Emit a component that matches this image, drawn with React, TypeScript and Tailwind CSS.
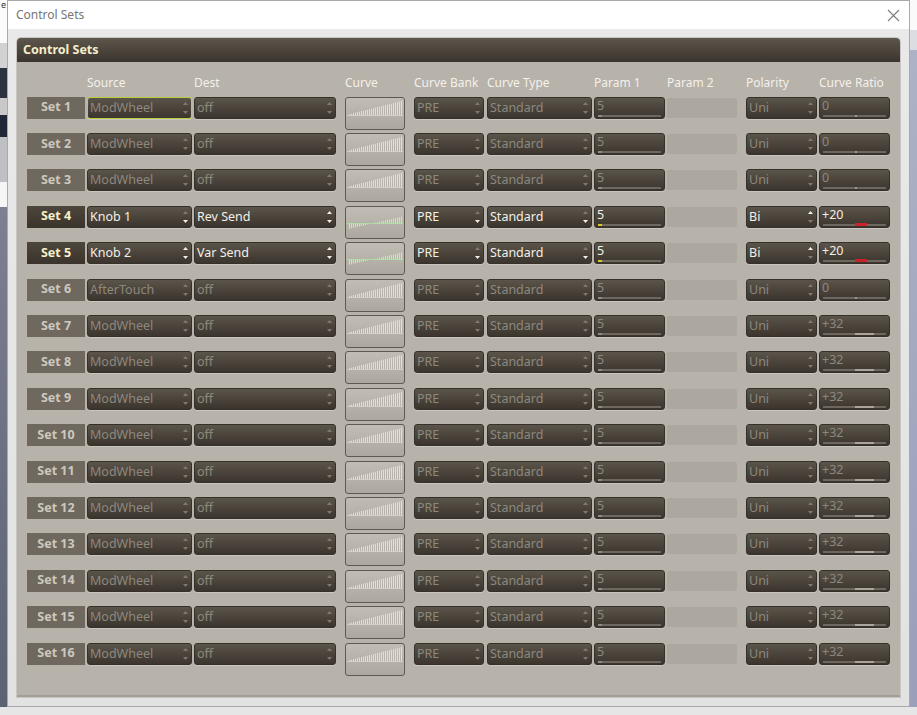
import React from 'react';

type Row = {
  name: string;
  src: string;
  dest: string;
  active?: boolean;
  ratio: string;
  ratioMark: 'dot' | 'light' | 'red';
  polarity: string;
  srcUp?: boolean;
};

const rows: Row[] = [
  { name: 'Set 1', src: 'ModWheel', dest: 'off', ratio: '0', ratioMark: 'dot', polarity: 'Uni' },
  { name: 'Set 2', src: 'ModWheel', dest: 'off', ratio: '0', ratioMark: 'dot', polarity: 'Uni' },
  { name: 'Set 3', src: 'ModWheel', dest: 'off', ratio: '0', ratioMark: 'dot', polarity: 'Uni' },
  { name: 'Set 4', src: 'Knob 1', dest: 'Rev Send', active: true, ratio: '+20', ratioMark: 'red', polarity: 'Bi' },
  { name: 'Set 5', src: 'Knob 2', dest: 'Var Send', active: true, ratio: '+20', ratioMark: 'red', polarity: 'Bi', srcUp: true },
  { name: 'Set 6', src: 'AfterTouch', dest: 'off', ratio: '0', ratioMark: 'dot', polarity: 'Uni' },
  ...Array.from({ length: 10 }, (_, i) => ({
    name: `Set ${i + 7}`,
    src: 'ModWheel',
    dest: 'off',
    ratio: '+32',
    ratioMark: 'light' as const,
    polarity: 'Uni',
  })),
];

const ON = '#f4f0e8';
const OFF = '#7f796f';

const Arrows = ({ up, down }: { up: boolean; down: boolean }) => (
  <div className="absolute right-[3px] top-[4px] bottom-[4px] flex flex-col justify-between">
    <svg width="5" height="3" viewBox="0 0 5 3">
      <path d="M0 3 L2.5 0 L5 3Z" fill={up ? ON : OFF} />
    </svg>
    <svg width="5" height="3" viewBox="0 0 5 3">
      <path d="M0 0 L5 0 L2.5 3Z" fill={down ? ON : OFF} />
    </svg>
  </div>
);

const fieldBase =
  'relative h-[22px] rounded-[3px] border bg-linear-to-b from-[#5b544a] to-[#3b352e] shadow-[0_1px_0_rgba(255,255,255,0.25)] overflow-hidden';

const Select = ({
  w,
  text,
  active,
  up,
  down,
  focus,
}: {
  w: string;
  text: string;
  active?: boolean;
  up?: boolean;
  down?: boolean;
  focus?: boolean;
}) => (
  <div className={`${fieldBase} ${w} ${focus ? 'border-[#b7cf3f]' : 'border-[#35302a]'}`}>
    <span
      className={`block pl-[2px] leading-[20px] text-[12.5px] whitespace-nowrap ${
        active ? 'text-[#f3efe7]' : 'text-[#8d887e]'
      }`}
    >
      {text}
    </span>
    <Arrows up={!!up} down={!!down} />
  </div>
);

const SliderField = ({
  w,
  text,
  active,
  mark,
}: {
  w: string;
  text: string;
  active?: boolean;
  mark: 'left' | 'dot' | 'light' | 'red';
}) => (
  <div className={`${fieldBase} ${w} border-[#35302a] flex flex-col`}>
    <span
      className={`block pl-[2px] h-[15px] leading-[15px] text-[12.5px] ${
        active ? 'text-[#f3efe7]' : 'text-[#8d887e]'
      }`}
    >
      {text}
    </span>
    <div className="mx-[3px] mt-[2px] h-[2px] bg-[#6d675d] flex">
      {mark === 'left' && (
        <div className={`w-[4px] h-[2px] ${active ? 'bg-[#d9c72a]' : 'bg-[#8f897f]'}`} />
      )}
      {mark === 'dot' && (
        <>
          <div className="w-1/2" />
          <div className="w-[2px] h-[2px] bg-[#9e988e]" />
        </>
      )}
      {mark === 'light' && (
        <>
          <div className="w-1/2" />
          <div className="w-[19px] h-[2px] bg-[#aaa49a]" />
        </>
      )}
      {mark === 'red' && (
        <>
          <div className="w-1/2" />
          <div className="w-[12px] h-[3px] -mt-[1px] bg-[#c8232b]" />
        </>
      )}
    </div>
  </div>
);

const Curve = ({ bipolar }: { bipolar?: boolean }) => {
  const xs = Array.from({ length: 27 }, (_, i) => 3.5 + i * 2);
  return (
    <div className="w-[60px] h-[33px] rounded-[3px] border border-[#5f5951] bg-linear-to-b from-[#c1bcb4] to-[#aca79f] overflow-hidden">
      <svg width="58" height="31" viewBox="0 0 58 31">
        {bipolar ? (
          <g>
            <line x1="1" y1="16.5" x2="57" y2="16.5" stroke="#a8eaa0" strokeWidth="1" opacity="0.7" />
            {xs.map((x) => {
              const y = 16.5 + 6 - (13.5 * x) / 58;
              return (
                <line key={x} x1={x} y1={16.5} x2={x} y2={y} stroke="#b2f2aa" strokeWidth="1.1" />
              );
            })}
          </g>
        ) : (
          <g opacity="0.8">
            <line x1="1" y1="17.5" x2="57" y2="17.5" stroke="#e4e0da" strokeWidth="1" opacity="0.7" />
            {xs.map((x) => {
              const h = 0.5 + (14.5 * x) / 58;
              return (
                <line key={x} x1={x} y1={17.5} x2={x} y2={17.5 - h} stroke="#eeeae4" strokeWidth="1" />
              );
            })}
          </g>
        )}
      </svg>
    </div>
  );
};

const headers: { label: string; cls: string }[] = [
  { label: '', cls: 'w-[58px]' },
  { label: 'Source', cls: 'w-[105px] ml-[2px]' },
  { label: 'Dest', cls: 'w-[142px] ml-[2px]' },
  { label: 'Curve', cls: 'w-[60px] ml-[9px]' },
  { label: 'Curve Bank', cls: 'w-[70px] ml-[9px]' },
  { label: 'Curve Type', cls: 'w-[105px] ml-[3px]' },
  { label: 'Param 1', cls: 'w-[71px] ml-[2px]' },
  { label: 'Param 2', cls: 'w-[70px] ml-[2px]' },
  { label: 'Polarity', cls: 'w-[71px] ml-[9px]' },
  { label: 'Curve Ratio', cls: 'w-[71px] ml-[2px]' },
];

export default function App() {
  return (
    <div className="w-[917px] h-[715px] flex flex-col overflow-hidden bg-[#e4e4e4] font-['Noto_Sans','Open_Sans',sans-serif]">
      <div className="h-[707px] flex">
        {/* background application peeking on the left */}
        <div className="w-[7px] flex flex-col">
          <div className="h-[43px] bg-[#fbfbfb] pl-px text-[9px] leading-[10px] text-[#333]">e</div>
          <div className="h-[25px] bg-[#d2d2d4]" />
          <div className="h-[30px] bg-[#2c3240]" />
          <div className="h-[17px] bg-[#c9c9cc]" />
          <div className="h-[22px] bg-[#1f2738]" />
          <div className="h-[45px] bg-[#bfc0c4]" />
          <div className="h-[25px] bg-[#f6f6f6]" />
          <div className="flex-1 bg-linear-to-b from-[#7c8090] to-[#5d6272]" />
        </div>

        {/* dialog window */}
        <div className="w-[903px] flex flex-col border border-[#a9a9a9] bg-white">
          <div className="h-[28px] flex items-center justify-between pl-[8px] pr-[9px] bg-white">
            <span className="text-[12px] text-[#767676]">Control Sets</span>
            <svg width="13" height="13" viewBox="0 0 13 13">
              <path d="M1 1 L12 12 M12 1 L1 12" stroke="#7d7d7d" strokeWidth="1.1" />
            </svg>
          </div>
          <div className="flex-1 flex flex-col p-[9px] pb-[9px] bg-linear-to-b from-[#e9e9e9] to-[#e2e2e2]">
            <div className="flex-1 flex flex-col rounded-t-[4px] overflow-hidden shadow-[0_0_0_1px_#c8c6c2]">
              <div className="h-[24px] flex items-center pl-[6px] bg-linear-to-b from-[#5d564c] to-[#3b352e]">
                <span className="text-[12.5px] font-bold text-[#f5eecb]">Control Sets</span>
              </div>
              <div className="flex-1 bg-[#b7b2aa] pl-[10px] border-b-2 border-[#a29d95]">
                <div className="h-[34.5px] flex items-center pt-[8px]">
                  {headers.map((h, i) => (
                    <div key={i} className={`${h.cls} text-[12px] text-[#f4f1ea] whitespace-nowrap`}>
                      {h.label}
                    </div>
                  ))}
                </div>
                {rows.map((r, i) => (
                  <div key={r.name} className="h-[36.42px] flex items-start">
                    <div
                      className={`w-[58px] h-[22px] flex items-center justify-center text-[12.5px] font-bold ${
                        r.active
                          ? 'bg-linear-to-b from-[#4d463c] to-[#3a342c] text-[#f6efc8]'
                          : 'bg-[#6e685f] text-[#cdc8be]'
                      }`}
                    >
                      {r.name}
                    </div>
                    <div className="ml-[2px]">
                      <Select
                        w="w-[105px]"
                        text={r.src}
                        active={r.active}
                        up={r.srcUp}
                        down={r.active}
                        focus={i === 0}
                      />
                    </div>
                    <div className="ml-[2px]">
                      <Select w="w-[142px]" text={r.dest} active={r.active} up={r.active} down={r.active} />
                    </div>
                    <div className="ml-[9px]">
                      <Curve bipolar={r.active} />
                    </div>
                    <div className="ml-[9px]">
                      <Select w="w-[70px]" text="PRE" active={r.active} down={r.active} />
                    </div>
                    <div className="ml-[3px]">
                      <Select w="w-[105px]" text="Standard" active={r.active} down={r.active} />
                    </div>
                    <div className="ml-[2px]">
                      <SliderField w="w-[71px]" text="5" active={r.active} mark="left" />
                    </div>
                    <div className="ml-[2px] mt-[1px] w-[70px] h-[20px] rounded-[2px] bg-[#ada89f]" />
                    <div className="ml-[9px]">
                      <Select w="w-[71px]" text={r.polarity} active={r.active} up={r.active} />
                    </div>
                    <div className="ml-[2px]">
                      <SliderField w="w-[71px]" text={r.ratio} active={r.active} mark={r.ratioMark} />
                    </div>
                  </div>
                ))}
              </div>
            </div>
          </div>
        </div>

        {/* background application on the right */}
        <div className="w-[7px] flex flex-col">
          <div className="h-[30px] bg-[#fafafa]" />
          <div className="h-[20px] bg-[#dcdde2]" />
          <div className="flex-1 bg-linear-to-b from-[#aeb2c6] to-[#9a9fba]" />
        </div>
      </div>
      <div className="h-[8px] bg-[#e6e6e6]" />
    </div>
  );
}
